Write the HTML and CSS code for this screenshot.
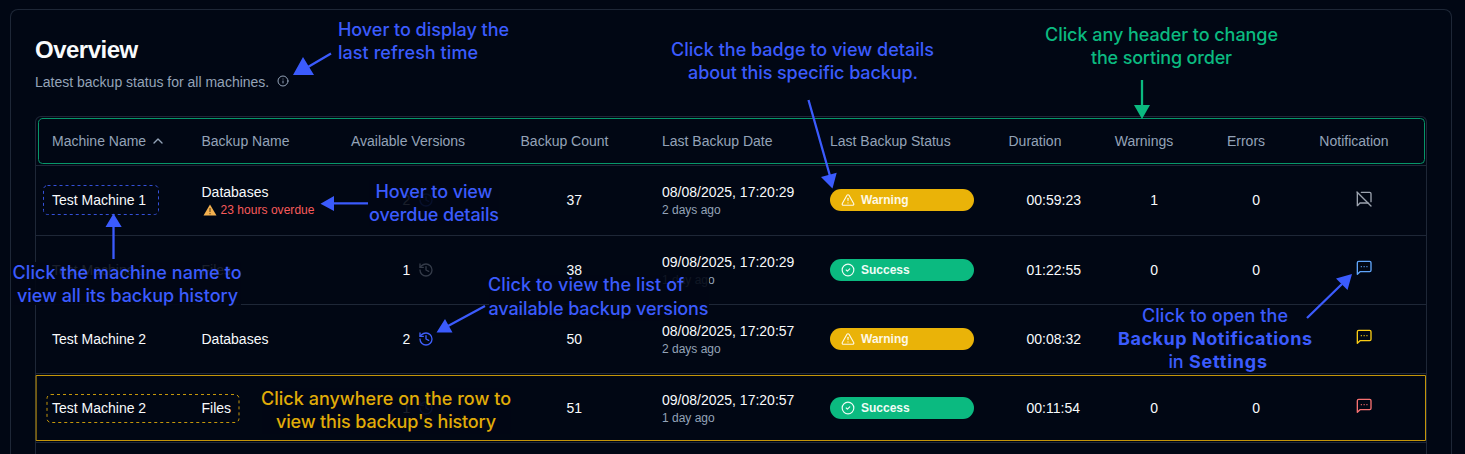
FILE: index.html
```
<!DOCTYPE html>
<html lang="en">
<head>
<meta charset="utf-8">
<title>Overview</title>
<link rel="stylesheet" href="styles.css">
</head>
<body>
<svg class="defs" aria-hidden="true">
  <symbol id="history" viewBox="0 0 24 24"><path d="M3 12a9 9 0 1 0 9-9 9.75 9.75 0 0 0-6.74 2.74L3 8"/><path d="M3 3v5h5"/><path d="M12 7v5l4 2"/></symbol>
  <symbol id="message" viewBox="0 0 24 24"><path d="M22.500 15.500a2 2 0 0 1-2 2H6l-4 4V4a2 2 0 0 1 2-2h16.500a2 2 0 0 1 2 2z"/><path d="M8 10h.01"/><path d="M12.200 10h.01"/><path d="M16.400 10h.01"/></symbol>
  <symbol id="message-off" viewBox="0 0 24 24"><path d="M22.500 16V4a2 2 0 0 0-2-2H8"/><path d="m1.500 1.500 21 21"/><path d="M2 3v19l4-4h12"/></symbol>
  <symbol id="triangle" viewBox="0 0 24 24"><path d="m21.730 18-8-14a2 2 0 0 0-3.480 0l-8 14A2 2 0 0 0 4 21h16a2 2 0 0 0 1.730-3"/><path d="M12 9v4"/><path d="M12 17h.01"/></symbol>
  <symbol id="check" viewBox="0 0 24 24"><circle cx="12" cy="12" r="10"/><path d="m9 12 2 2 4-4"/></symbol>
</svg>
<main class="card">
  <h1 class="title">Overview</h1>
  <p class="subtitle">Latest backup status for all machines.
    <svg class="info" viewBox="0 0 24 24"><circle cx="12" cy="12" r="10"/><path d="M12 16v-4"/><path d="M12 8h.01"/></svg>
  </p>
  <section class="table">
    <div class="row head">
      <span class="cell">Machine Name <svg class="chevron" viewBox="0 0 24 24"><path d="m18 15-6-6-6 6"/></svg></span>
      <span class="cell">Backup Name</span>
      <span class="cell mid">Available Versions</span>
      <span class="cell mid count">Backup Count</span>
      <span class="cell">Last Backup Date</span>
      <span class="cell">Last Backup Status</span>
      <span class="cell dur">Duration</span>
      <span class="cell mid">Warnings</span>
      <span class="cell mid">Errors</span>
      <span class="cell mid">Notification</span>
    </div>
    <div class="row first">
      <span class="cell">Test Machine 1</span>
      <span class="cell stack"><span>Databases</span><span class="overdue"><svg class="alert" viewBox="0 0 14 12"><path class="alert-fill" d="M7 .4 13.500 11.500H.5z"/><path class="alert-mark" d="M6.400 4h1.200v4H6.400zM6.400 9h1.200v1.200H6.400z"/></svg>23 hours overdue</span></span>
      <span class="cell ver">2 <svg class="icon blue"><use href="#history"/></svg></span>
      <span class="cell mid num">37</span>
      <span class="cell stack"><span>08/08/2025, 17:20:29</span><span class="ago">2 days ago</span></span>
      <span class="cell"><span class="badge warn"><svg class="icon"><use href="#triangle"/></svg>Warning</span></span>
      <span class="cell dur val">00:59:23</span>
      <span class="cell mid num">1</span>
      <span class="cell mid num">0</span>
      <span class="cell mid action"><svg class="bell grey"><use href="#message-off"/></svg></span>
    </div>
    <div class="row">
      <span class="cell">Test Machine 1</span>
      <span class="cell">Files</span>
      <span class="cell ver">1 <svg class="icon dim"><use href="#history"/></svg></span>
      <span class="cell mid num">38</span>
      <span class="cell stack"><span>09/08/2025, 17:20:29</span><span class="ago">1 day ago</span></span>
      <span class="cell"><span class="badge ok"><svg class="icon"><use href="#check"/></svg>Success</span></span>
      <span class="cell dur val">01:22:55</span>
      <span class="cell mid num">0</span>
      <span class="cell mid num">0</span>
      <span class="cell mid action"><svg class="bell sky"><use href="#message"/></svg></span>
    </div>
    <div class="row">
      <span class="cell">Test Machine 2</span>
      <span class="cell">Databases</span>
      <span class="cell ver">2 <svg class="icon blue"><use href="#history"/></svg></span>
      <span class="cell mid num">50</span>
      <span class="cell stack"><span>08/08/2025, 17:20:57</span><span class="ago">2 days ago</span></span>
      <span class="cell"><span class="badge warn"><svg class="icon"><use href="#triangle"/></svg>Warning</span></span>
      <span class="cell dur val">00:08:32</span>
      <span class="cell"></span>
      <span class="cell"></span>
      <span class="cell mid action"><svg class="bell yellow"><use href="#message"/></svg></span>
    </div>
    <div class="row">
      <span class="cell">Test Machine 2</span>
      <span class="cell">Files</span>
      <span class="cell ver">1 <svg class="icon blue"><use href="#history"/></svg></span>
      <span class="cell mid num">51</span>
      <span class="cell stack"><span>09/08/2025, 17:20:57</span><span class="ago">1 day ago</span></span>
      <span class="cell"><span class="badge ok"><svg class="icon"><use href="#check"/></svg>Success</span></span>
      <span class="cell dur val">00:11:54</span>
      <span class="cell mid num">0</span>
      <span class="cell mid num">0</span>
      <span class="cell mid action"><svg class="bell red"><use href="#message"/></svg></span>
    </div>
  </section>
</main>
<svg class="notes" viewBox="0 0 1465 454">
  <g class="veil">
    <rect x="13" y="262" width="228" height="43"/>
    <rect x="369" y="180" width="130" height="46"/>
    <rect x="489" y="275" width="220" height="46"/>
    <rect x="262" y="388" width="249" height="46"/>
  </g>
  <rect class="frame green" x="38.500" y="118.500" width="1386" height="45" rx="4"/>
  <rect class="frame gold" x="36.500" y="375.500" width="1389" height="65"/>
  <rect class="frame indigo dash" x="43.500" y="185.500" width="115" height="29" rx="4"/>
  <rect class="frame gold dash" x="47" y="394.500" width="192" height="28" rx="4"/>
  <g class="arrow a-blue">
    <path d="M331 53.500 308 67M808.500 100 830 176M113.500 259V226M368 203.300H333M485 306 448 326M1307 318 1342 284"/>
    <path class="tip" d="M293 75 303 57 314 75zM832.500 188.500 821 177 836.700 172.700zM113.500 213.500 121.700 227H105.500zM320.500 203.800 334 196V211zM436.500 332.500 445 319 452.500 332.500zM1352 274 1336 278.500 1347.500 290z"/>
  </g>
  <g class="arrow a-green">
    <path d="M1142 80V107"/>
    <path class="tip" d="M1134 105H1150L1142 119z"/>
  </g>
  <g class="say t-blue">
    <text x="338" y="35.500" textLength="171">Hover to display the</text>
    <text x="338" y="59" textLength="140">last refresh time</text>
    <text x="671" y="56" textLength="263">Click the badge to view details</text>
    <text x="688" y="79" textLength="230">about this specific backup.</text>
    <text x="12.500" y="279" textLength="229">Click the machine name to</text>
    <text x="17" y="302" textLength="221">view all its backup history</text>
    <text x="375.500" y="198" textLength="117">Hover to view</text>
    <text x="369" y="221" textLength="130">overdue details</text>
    <text x="488" y="291" textLength="196">Click to view the list of</text>
    <text x="488.500" y="314.500" textLength="220">available backup versions</text>
    <text x="1142" y="321.500" textLength="146">Click to open the</text>
    <text class="strong" x="1118" y="345" textLength="194">Backup Notifications</text>
    <text x="1168.500" y="368" textLength="15">in</text>
    <text class="strong" x="1189" y="368" textLength="78">Settings</text>
  </g>
  <g class="say t-green">
    <text x="1045" y="41" textLength="233">Click any header to change</text>
    <text x="1091" y="64" textLength="141">the sorting order</text>
  </g>
  <g class="say t-gold">
    <text x="261" y="404.500" textLength="250">Click anywhere on the row to</text>
    <text x="276" y="428" textLength="220">view this backup's history</text>
  </g>
</svg>
</body>
</html>
```
FILE: styles.css
```
* { box-sizing: border-box; }
body {
  margin: 0;
  height: 454px;
  overflow: hidden;
  background: #010714;
  color: #f8fafc;
  font: 14px/20px "Liberation Sans", Arial, sans-serif;
}
svg { fill: none; stroke: currentColor; stroke-width: 2; stroke-linecap: round; stroke-linejoin: round; flex: none; }
.defs { display: none; }
.card {
  width: 1442px;
  height: 445px;
  margin: 9px 0 0 10px;
  padding: 24px 24px 0;
  border: 1px solid #1e2737;
  border-bottom: 0;
  border-radius: 8px 8px 0 0;
}
.title { margin: 0; font-size: 24px; line-height: 32px; font-weight: 700; letter-spacing: -.5px; }
.subtitle { display: flex; align-items: center; gap: 8px; margin: 6px 0 24px; color: #94a3b8; }
.info { width: 12px; height: 12px; position: relative; top: -1px; }
.table { height: 338px; border: 1px solid #1e2737; border-bottom: 0; border-radius: 6px 6px 0 0; width: 1392px; }
.row {
  display: grid;
  grid-template-columns: 149px 149px 148px 164px 168px 176px 106px 96px 108px 108px;
  height: 69px;
  border-bottom: 1px solid #1e2737;
}
.row.first { height: 70px; padding-bottom: 2px; }
.head { height: 49px; color: #94a3b8; }
.cell { display: flex; align-items: center; padding: 0 16px; white-space: nowrap; }
.cell:nth-child(2) { padding-left: 16.500px; }
.mid { justify-content: center; padding: 0; }
.mid.count { padding-left: 1px; }
.mid.num { padding-left: 20.500px; }
.mid.action { padding-left: 20px; }
.ver { padding-left: 68.500px; gap: 8px; }
.dur { padding: 0 0 0 18.500px; }
.dur.val { padding-left: 36.500px; }
.chevron { width: 16px; height: 16px; margin-left: 4px; }
.stack { flex-direction: column; align-items: flex-start; justify-content: center; }
.ago, .overdue { font-size: 12px; line-height: 16px; color: #94a3b8; }
.overdue { display: flex; align-items: center; gap: 4px; color: #f85b5b; letter-spacing: .04px; }
.alert { width: 14px; height: 12px; margin-left: 1px; stroke: none; }
.alert-fill { fill: #f3b04e; }
.alert-mark { fill: #6b4d22; }
.icon { width: 16px; height: 16px; }
.blue { color: #3f5ffb; }
.dim { color: #343b49; }
.badge {
  display: flex;
  align-items: center;
  gap: 4px;
  width: 144px;
  height: 22px;
  padding: 0 11px;
  border-radius: 11px;
  font-size: 12px;
  line-height: 16px;
  font-weight: 700;
}
.badge .icon { width: 14px; height: 14px; margin-right: 2px; }
.warn { background: #eab308; color: #fdf8e6; }
.ok { background: #0bba80; color: #effcf6; }
.bell { width: 16px; height: 16px; margin-bottom: 4px; }
.first .bell { margin-bottom: 2px; }
.grey { color: #9ca3af; }
.sky { color: #60a5fa; }
.yellow { color: #facc15; }
.red { color: #f87171; }

/* Annotation layer drawn over the table */
.notes { position: absolute; left: 0; top: 0; width: 1465px; height: 454px; }
.veil { fill: #010714; fill-opacity: .9; stroke: none; }
.frame { stroke-width: 1; }
.green { stroke: #079669; }
.gold { stroke: #c4960a; }
.indigo { stroke: #3450d8; }
.dash { stroke-dasharray: 3 3; stroke-linecap: butt; }
.arrow { stroke-width: 2.300; stroke-linecap: butt; }
.a-blue { color: #3b5bfd; }
.a-green { color: #0bba80; }
.tip { fill: currentColor; stroke: none; }
.say { font: 500 18px Inter, sans-serif; stroke: none; }
.t-blue { fill: #3b5bfd; }
.t-green { fill: #0bba80; }
.t-gold { fill: #e0ac08; }
.strong { font-weight: 700; }
```
